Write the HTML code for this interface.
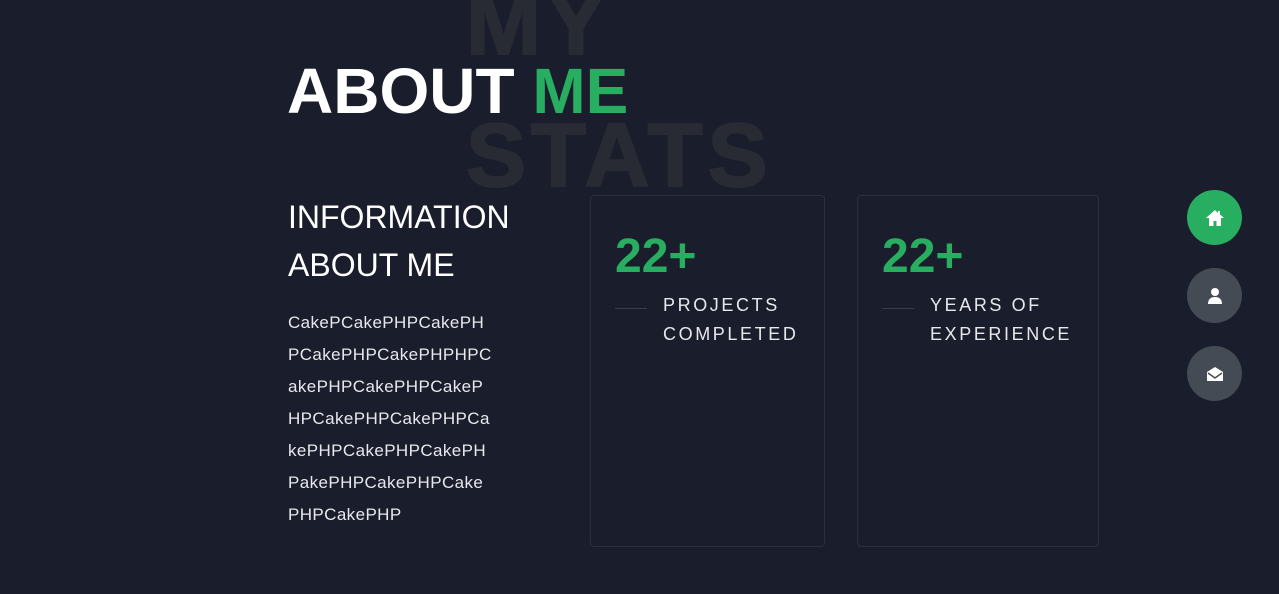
<!DOCTYPE html>
<html><head><style>
*{margin:0;padding:0;box-sizing:border-box}
body{width:1279px;height:594px;background:#1a1d2b;font-family:"Liberation Sans",Arial,sans-serif;position:relative;overflow:hidden;color:#fff}
.ghost{position:absolute;font-weight:bold;font-size:90px;color:#282b34;line-height:1;white-space:nowrap;letter-spacing:5px;-webkit-text-stroke:2px #282b34}
.h1{position:absolute;left:287px;top:59px;font-size:64px;font-weight:bold;line-height:1;white-space:nowrap}
.h1 span{color:#27ae60}
.h3{position:absolute;left:288px;top:193px;font-size:32px;line-height:48px;width:260px}
.p{position:absolute;left:288px;top:307px;font-size:17px;letter-spacing:0.4px;line-height:32px;color:#e6e8ee;white-space:nowrap}
.card{position:absolute;top:195px;height:352px;border:1px solid #2c303c;border-radius:4px}
.num{position:absolute;left:24px;top:37px;font-size:48px;font-weight:bold;color:#27ae60;line-height:1}
.line{position:absolute;left:24px;top:112px;width:32px;height:1px;background:#3a3e48}
.lab{position:absolute;left:72px;top:95px;font-size:18px;letter-spacing:2.6px;line-height:29px;color:#e6e8ee;white-space:nowrap}
.c{position:absolute;left:1187px;width:55px;height:55px;border-radius:50%;background:#454b55;display:flex;align-items:center;justify-content:center}
</style></head><body>
<div class="ghost" style="left:466px;top:-21px">MY</div>
<div class="ghost" style="left:466px;top:111px">STATS</div>
<div class="h1">ABOUT <span>ME</span></div>
<div class="h3">INFORMATION ABOUT ME</div>
<div class="p">CakePCakePHPCakePH<br>PCakePHPCakePHPHPC<br>akePHPCakePHPCakeP<br>HPCakePHPCakePHPCa<br>kePHPCakePHPCakePH<br>PakePHPCakePHPCake<br>PHPCakePHP</div>
<div class="card" style="left:590px;width:235px"><div class="num">22+</div><div class="line"></div><div class="lab">PROJECTS<br>COMPLETED</div></div>
<div class="card" style="left:857px;width:242px"><div class="num">22+</div><div class="line"></div><div class="lab">YEARS OF<br>EXPERIENCE</div></div>
<div class="c" style="top:190px;background:#27ae60"><svg width="20" height="18" viewBox="0 0 20 18"><path d="M10 1L1 9h3v8h4.5v-5h3v5H16V9h3L15 5.5V2h-2v2z" fill="#fff"/></svg></div>
<div class="c" style="top:268px"><svg width="16" height="18" viewBox="0 0 16 18"><circle cx="8" cy="5" r="4" fill="#fff"/><path d="M1 17c0-5 3-7 7-7s7 2 7 7z" fill="#fff"/></svg></div>
<div class="c" style="top:346px"><svg width="18" height="16" viewBox="0 0 18 16"><path d="M1 6L9 1l8 5v9H1z" fill="#fff"/><path d="M2 7l7 5 7-5" fill="none" stroke="#454b55" stroke-width="1.5"/></svg></div>
</body></html>
